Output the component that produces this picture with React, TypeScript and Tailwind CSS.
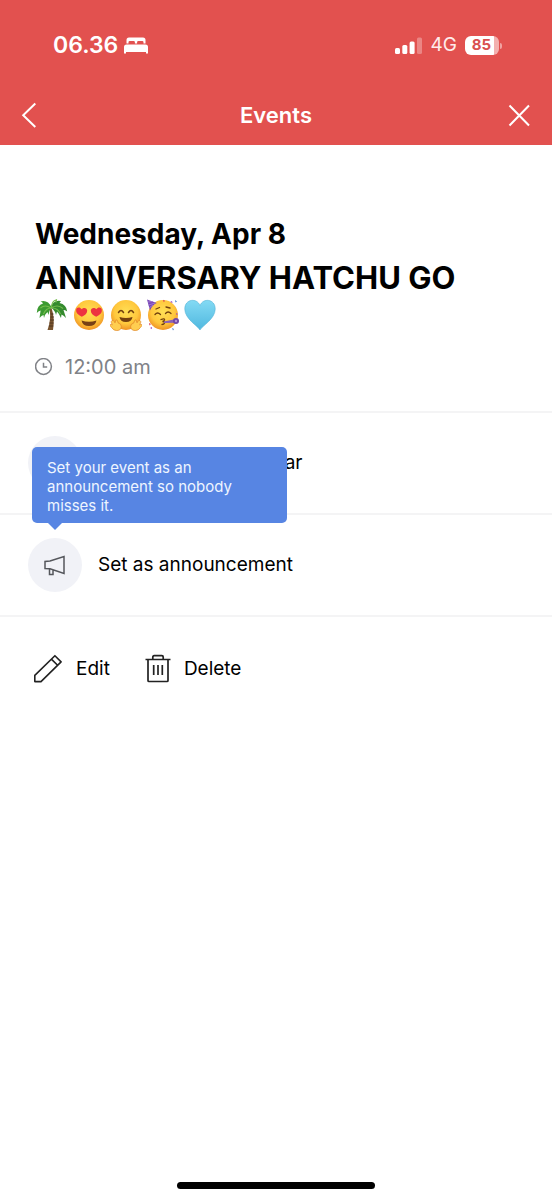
import type { ReactNode } from "react";

const FONT = "font-['Inter','Liberation_Sans',sans-serif]";

export default function App() {
  return (
    <div className={`flex min-h-screen flex-col bg-white text-black ${FONT}`}>
      <header className="bg-[#e2514f] text-white">
        <StatusBar />
        <nav className="grid h-[60px] grid-cols-[1fr_auto_1fr] items-center px-5">
          <button type="button" aria-label="Back" className="justify-self-start">
            <svg className="h-7 w-5" viewBox="0 0 20 28" fill="none" stroke="currentColor" strokeWidth="2">
              <path d="M15.3 2.5 3.2 14.3 15.3 26" />
            </svg>
          </button>
          <h1 className="text-[22px] font-semibold">Events</h1>
          <button type="button" aria-label="Close" className="justify-self-end">
            <svg className="h-7 w-6" viewBox="0 0 24 28" fill="none" stroke="currentColor" strokeWidth="2">
              <path d="m1.5 4.5 19.5 20M21 4.5l-19.5 20" />
            </svg>
          </button>
        </nav>
      </header>

      <main>
        <section className="px-[35px] pt-[68px] pb-7">
          <p className="text-[28px] leading-[43px] font-bold">Wednesday, Apr 8</p>
          <h2 className="text-[31px] leading-[43px] font-bold">ANNIVERSARY HATCHU GO</h2>
          <Emojis />
          <p className="mt-5 flex items-center gap-3 text-xl leading-8 text-[#808287]">
            <svg className="h-[18px] w-[18px]" viewBox="0 0 18 18" fill="none" stroke="currentColor" strokeWidth="1.5">
              <circle cx="8.5" cy="8.5" r="7.9" />
              <path d="M8.5 4.8V9h3.7" strokeWidth="1.5" />
            </svg>
            12:00 am
          </p>
        </section>

        <ul className="border-y-2 border-[#f4f4f5]">
          <li className="border-b-2 border-[#f4f4f5]">
            <OptionRow label="Add to phone calendar">
              <path d="M4 6h16v14H4zM4 10h16M8 3v5M16 3v5" />
            </OptionRow>
          </li>
          <li className="relative">
            <OptionRow label="Set as announcement">
              <path d="M2 8.5v7l5 .3 14 4.7v-17L7 8zM6.5 16v5.5h3.5v-5" />
            </OptionRow>
            <div
              role="tooltip"
              className="absolute top-2 left-8 w-[255px] -translate-y-full rounded-[5px] bg-[#5785e3] px-[15px] pt-[11px] pb-2 text-[15px] leading-[19px] text-[#eef5ff]"
            >
              Set your event as an announcement so nobody misses it.
              <svg className="absolute top-full left-4 h-[7px] w-[14px]" viewBox="0 0 14 7" fill="#5785e3">
                <path d="M0 0h14L7 7z" />
              </svg>
            </div>
          </li>
        </ul>

        <div className="flex gap-[34px] px-8 py-9">
          <button type="button" className="flex items-center gap-3 text-[19px] leading-8">
            <svg className="h-8 w-8" viewBox="0 0 32 32" fill="none" stroke="#222" strokeWidth="1.6">
              <path d="M2.8 28.6v-6.2L22.9 2.7l6.2 6.2L9 28.6zM19.4 6.1l6.2 6.2" strokeLinejoin="round" />
            </svg>
            Edit
          </button>
          <button type="button" className="flex items-center gap-3 text-[19px] leading-8">
            <svg className="h-8 w-7" viewBox="0 0 28 32" fill="none" stroke="#222" strokeWidth="1.7">
              <path d="M1.5 6.5h25M4 6.5v21q0 1 1 1h18q1 0 1-1v-21M8.8 6.5V4q0-1.3 1.3-1.3h7.8q1.3 0 1.3 1.3v2.5M9.7 12v10M14 12v10M18.3 12v10" />
            </svg>
            Delete
          </button>
        </div>
      </main>

      <footer className="mt-auto flex justify-center pb-[11px]">
        <div className="h-[7px] w-[36%] rounded-full bg-black" />
      </footer>
    </div>
  );
}

function StatusBar() {
  return (
    <div className="flex h-[85px] items-center justify-between pt-1.5 pr-[50px] pl-[53px]">
      <div className="flex items-center gap-1.5 text-[23px] font-semibold">
        06.36
        <svg className="h-[17px] w-6" viewBox="0 0 24 17" fill="currentColor" aria-hidden="true">
          <path d="M2.5 6.5V3Q2.5.5 5 .5h14Q21.5.5 21.5 3v3.5h-2V5.3q0-1.2-1.2-1.2h-4q-1.2 0-1.2 1.2v1.2h-2.2V5.3q0-1.2-1.2-1.2h-4Q4.500 4.100 4.500 5.300V6.500z" />
          <path d="M0 16.500V10q0-2.500 2.500-2.500h19Q24 7.500 24 10v6.500h-2V15H2v1.500z" />
        </svg>
      </div>
      <div className="flex items-center gap-2 text-[19px]">
        <svg className="h-[18px] w-7" viewBox="0 0 28 18" fill="currentColor" aria-hidden="true">
          <rect x="0" y="11" width="5" height="6" rx="1.500" />
          <rect x="7.300" y="8" width="5" height="9" rx="1.500" />
          <rect x="14.600" y="4.500" width="5" height="12.500" rx="1.500" />
          <rect x="22" y="0.500" width="5" height="16.500" rx="1.500" opacity="0.300" />
        </svg>
        <span className="text-[#ffeceb]">4G</span>
        <span className="flex items-center gap-px">
          <span className="flex h-[19px] w-[34px] items-center justify-center rounded-[6px] bg-linear-to-r from-white from-85% to-[#f3b0af] to-85% pr-px text-[15px] font-bold text-[#d9504f]">
            85
          </span>
          <span className="h-1.5 w-0.5 rounded-r-full bg-[#f0a2a1]" />
        </span>
      </div>
    </div>
  );
}

function OptionRow({ label, children }: { label: string; children: ReactNode }) {
  return (
    <button type="button" className="flex w-full items-center gap-4 px-7 py-[23px] text-left text-[19px]">
      <span className="flex h-[54px] w-[54px] items-center justify-center rounded-full bg-[#f1f2f7]">
        <svg className="h-6 w-6" viewBox="0 0 24 24" fill="none" stroke="#55575c" strokeWidth="1.5">
          {children}
        </svg>
      </span>
      {label}
    </button>
  );
}

function Emojis() {
  return (
    <div className="flex h-8 gap-[5px] pl-px">
      <svg className="h-8 w-8" viewBox="0 0 32 32" role="img" aria-label="Palm tree">
        <path d="M15.500 9q3.500 10 1.500 22h-5.500Q15.500 20 13.500 10z" fill="#79542f" />
        <path d="M14.500 15h3M14.500 18h3.500M14 21h4M13.500 24h4M12.800 27h4.500" stroke="#4d3420" strokeWidth="0.900" />
        <path d="M15.500 8.500Q12 .5 4.500 2.500q2 .5 2.500 2Q1 6 .8 14q2-2.500 3.800-2.500L3.500 19q2-2.500 4-3l.5 3q1-4 3.500-6l1 3Q12.500 12 15.500 8.500z" fill="#3c9a31" />
        <path d="M15 8.500Q17 .5 25 2l-1.500 2q7 1.500 7.700 8.500-2-2-3.700-1.500L30 19q-2.500-3-4.500-3.500L25 19q-1.500-4-4-6.500L20 16q-.5-4-5-7.500z" fill="#348a2e" />
        <path d="M15.500 9Q15.500 2 20.500.8L20 3.500M15 9Q9 5 4.500 9M15 9q-5 0-7.500 6M16 8.500q6-3.500 11 1M16 9q6 0 8.500 6" fill="none" stroke="#75bd4c" strokeWidth="1.100" />
      </svg>

      <svg className="h-8 w-8" viewBox="0 0 32 32" role="img" aria-label="Smiling face with heart eyes">
        <Face id="hearts" />
        <path d="M8.800 17.800C5 16 2.800 13.800 3.100 11c.4-3 4-3.200 5.500-.7 2.200-2.400 5.600-1.200 5.600 1.500 0 2.500-2.100 4.500-5.400 6z" fill="#ed3340" />
        <path d="M23.200 17.800c3.800-1.800 6-4 5.700-6.800-.4-3-4-3.200-5.500-.7-2.200-2.400-5.600-1.200-5.600 1.500 0 2.500 2.100 4.500 5.400 6z" fill="#ed3340" />
        <path d="M8.500 21.500q7.500 2.500 15 0-1 5.500-7.500 5.500t-7.500-5.500z" fill="#774016" />
      </svg>

      <svg className="h-8 w-8" viewBox="0 0 32 32" role="img" aria-label="Hugging face">
        <Face id="hug" />
        <path d="M8.500 13.500q2.500-4 5 0M18.500 13.500q2.500-4 5 0" fill="none" stroke="#71400f" strokeWidth="1.500" strokeLinecap="round" />
        <path d="M9.500 18q6.500 2 13 0-.7 5-6.500 5t-6.500-5z" fill="#74400f" />
        <path d="M2 21.500q1.200-.8 2 .8l1 1.500.8-2.700q1.500-1 1.700 1l.8 2q2.700.5 3 3 .4 4.200-4.500 4.500-3.300 0-5.300-3.200L0 26.500q-.2-1.500 1.500-1l.8.5-1-2.500q-.3-1.300.7-2z" fill="#ffce50" stroke="#df872b" strokeWidth="0.700" />
        <path d="M30 21.500q-1.200-.8-2 .8l-1 1.500-.8-2.700q-1.500-1-1.700 1l-.8 2q-2.700.5-3 3-.4 4.200 4.500 4.500 3.300 0 5.300-3.200l1.500-1.900q.2-1.500-1.500-1l-.8.5 1-2.500q.3-1.300-.7-2z" fill="#ffce50" stroke="#df872b" strokeWidth="0.700" />
      </svg>

      <svg className="h-8 w-8" viewBox="0 0 32 32" role="img" aria-label="Partying face">
        <Face id="party" />
        <path d="M0 .5 9.800 4Q5.500 5.500 3 11.500z" fill="#7747b5" />
        <path d="m1 3 5-.5M1.500 6 8 4M2 9l4-3" stroke="#a57bd5" strokeWidth="0.900" />
        <path d="M8 15.500q2.500-3 5.500 0M18.500 14.500q2.500-3 5.500 0M9 10l3.500-1.500M19 8l4 1" fill="none" stroke="#71400f" strokeWidth="1.300" strokeLinecap="round" />
        <path d="M14 20.500q4-1.500 3.500.5-.4 1-2 1.500 2.500 0 2 1.500-.5 1.500-2.500 1.500" fill="none" stroke="#71400f" strokeWidth="1.300" strokeLinecap="round" />
        <path d="m17 22.500 11-2.300v3.500L17 24z" fill="#8a60b8" />
        <circle cx="29" cy="22" r="3" fill="#7148a8" />
        <circle cx="29" cy="22" r="1.200" fill="#b291d3" />
        <path d="m16 .8 2 1-1.200 1.500zM2 24l2 1-1.500 1.500z" fill="#d83a54" />
        <path d="m28 1 2 1.500-1.500 1zM25 29l2 1-1 1.500z" fill="#477dcc" />
        <path d="m23 3 2-1 .5 2zM3 29l2-1v2zM29 14l2 1-1.500 1z" fill="#a14ab8" />
      </svg>

      <svg className="h-8 w-8" viewBox="0 0 32 32" role="img" aria-label="Light blue heart">
        <defs>
          <linearGradient id="blue" x1="0" y1="0" x2="0" y2="1">
            <stop stopColor="#83daf4" />
            <stop offset="1" stopColor="#50b8df" />
          </linearGradient>
        </defs>
        <path d="M16 31C14 27 .8 20 .8 10 .8-.3 13-1.300 16 6.500 19-1.300 31.200-.3 31.200 10 31.200 20 18 27 16 31z" fill="url(#blue)" stroke="#55b4d6" strokeWidth="0.600" />
      </svg>
    </div>
  );
}

function Face({ id }: { id: string }) {
  return (
    <>
      <defs>
        <radialGradient id={id} cx="0.500" cy="0.400" r="0.600">
          <stop stopColor="#ffdf55" />
          <stop offset="0.650" stopColor="#ffc83d" />
          <stop offset="1" stopColor="#ef9224" />
        </radialGradient>
      </defs>
      <circle cx="16" cy="16" r="15" fill={`url(#${id})`} />
    </>
  );
}
